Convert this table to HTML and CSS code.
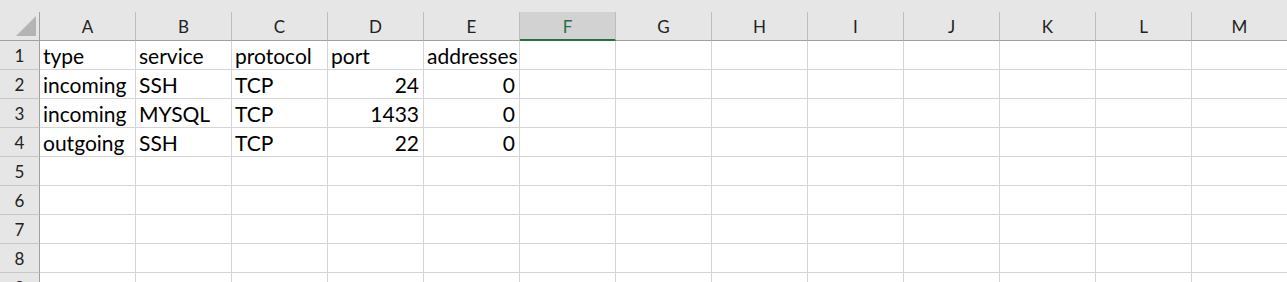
FILE: index.html
```html
<!DOCTYPE html>
<html lang="en">
<head>
<meta charset="utf-8">
<title>Sheet1</title>
<link rel="stylesheet" href="styles.css">
</head>
<body>
<div class="sheet">
  <div class="band"></div>
  <div class="grid">
    <div class="corner"><svg width="39" height="28" viewBox="0 0 39 28"><polygon points="36,4 36,24 16,24" fill="#b4b4b4"/></svg></div>
    <div class="colhead">A</div><div class="colhead">B</div><div class="colhead">C</div><div class="colhead">D</div><div class="colhead">E</div><div class="colhead active">F</div><div class="colhead">G</div><div class="colhead">H</div><div class="colhead">I</div><div class="colhead">J</div><div class="colhead">K</div><div class="colhead">L</div><div class="colhead">M</div>

    <div class="rowhead">1</div><div class="cell">type</div><div class="cell">service</div><div class="cell">protocol</div><div class="cell">port</div><div class="cell">addresses</div><div class="cell"></div><div class="cell"></div><div class="cell"></div><div class="cell"></div><div class="cell"></div><div class="cell"></div><div class="cell"></div><div class="cell"></div>

    <div class="rowhead">2</div><div class="cell">incoming</div><div class="cell">SSH</div><div class="cell">TCP</div><div class="cell num">24</div><div class="cell num">0</div><div class="cell"></div><div class="cell"></div><div class="cell"></div><div class="cell"></div><div class="cell"></div><div class="cell"></div><div class="cell"></div><div class="cell"></div>

    <div class="rowhead">3</div><div class="cell">incoming</div><div class="cell">MYSQL</div><div class="cell">TCP</div><div class="cell num">1433</div><div class="cell num">0</div><div class="cell"></div><div class="cell"></div><div class="cell"></div><div class="cell"></div><div class="cell"></div><div class="cell"></div><div class="cell"></div><div class="cell"></div>

    <div class="rowhead">4</div><div class="cell">outgoing</div><div class="cell">SSH</div><div class="cell">TCP</div><div class="cell num">22</div><div class="cell num">0</div><div class="cell"></div><div class="cell"></div><div class="cell"></div><div class="cell"></div><div class="cell"></div><div class="cell"></div><div class="cell"></div><div class="cell"></div>

    <div class="rowhead">5</div><div class="cell"></div><div class="cell"></div><div class="cell"></div><div class="cell"></div><div class="cell"></div><div class="cell"></div><div class="cell"></div><div class="cell"></div><div class="cell"></div><div class="cell"></div><div class="cell"></div><div class="cell"></div><div class="cell"></div>

    <div class="rowhead">6</div><div class="cell"></div><div class="cell"></div><div class="cell"></div><div class="cell"></div><div class="cell"></div><div class="cell"></div><div class="cell"></div><div class="cell"></div><div class="cell"></div><div class="cell"></div><div class="cell"></div><div class="cell"></div><div class="cell"></div>

    <div class="rowhead">7</div><div class="cell"></div><div class="cell"></div><div class="cell"></div><div class="cell"></div><div class="cell"></div><div class="cell"></div><div class="cell"></div><div class="cell"></div><div class="cell"></div><div class="cell"></div><div class="cell"></div><div class="cell"></div><div class="cell"></div>

    <div class="rowhead">8</div><div class="cell"></div><div class="cell"></div><div class="cell"></div><div class="cell"></div><div class="cell"></div><div class="cell"></div><div class="cell"></div><div class="cell"></div><div class="cell"></div><div class="cell"></div><div class="cell"></div><div class="cell"></div><div class="cell"></div>

    <div class="rowhead">9</div><div class="cell"></div><div class="cell"></div><div class="cell"></div><div class="cell"></div><div class="cell"></div><div class="cell"></div><div class="cell"></div><div class="cell"></div><div class="cell"></div><div class="cell"></div><div class="cell"></div><div class="cell"></div><div class="cell"></div>
  </div>
</div>
</body>
</html>
```

FILE: styles.css
```css
html, body {
  margin: 0;
  padding: 0;
  background: #ffffff;
  overflow: hidden;
}

.sheet {
  width: 1287px;
  height: 282px;
  overflow: hidden;
  font-family: Lato, "Open Sans", sans-serif;
  font-size: 17px;
  color: #000000;
}

/* blank strip above the column letters */
.band {
  height: 12px;
  background: #e6e6e6;
}

.grid {
  display: grid;
  grid-template-columns: 40px repeat(13, 96px);
  grid-auto-rows: 29px;
  width: 1288px;
}

.grid > div {
  box-sizing: border-box;
  white-space: nowrap;
  overflow: hidden;
  padding-top: 2px;
  line-height: 26px;
}

.corner {
  background: #e6e6e6;
  border-right: 1px solid #a0a0a0;
  border-bottom: 1px solid #a0a0a0;
  padding-top: 0 !important;
  line-height: 0 !important;
}

.corner svg {
  display: block;
}

.colhead {
  background: #e6e6e6;
  border-right: 1px solid #bdbdbd;
  border-bottom: 1px solid #a0a0a0;
  text-align: center;
  color: #222222;
}

.colhead.active {
  background: #d2d2d2;
  color: #217346;
  border-bottom: 2px solid #217346;
}

.rowhead {
  background: #e6e6e6;
  border-right: 1px solid #a0a0a0;
  border-bottom: 1px solid #c6c6c6;
  text-align: center;
  color: #222222;
}

.cell {
  font-size: 21px;
  border-right: 1px solid #d4d4d4;
  border-bottom: 1px solid #d4d4d4;
  padding-left: 3px;
  padding-right: 4px;
}

.cell.num {
  text-align: right;
}
```
